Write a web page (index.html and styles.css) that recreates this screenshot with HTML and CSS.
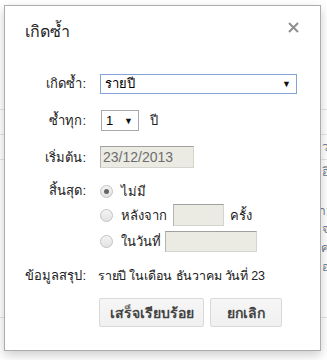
FILE: index.html
```html
<!DOCTYPE html>
<html lang="th">
<head>
    <meta charset="UTF-8">
    <meta name="viewport" content="width=device-width, initial-scale=1.0">
    <title>เกิดซ้ำ</title>
    <link rel="stylesheet" href="styles.css">
</head>
<body>

    <!-- หน้าที่อยู่ด้านหลังกล่องโต้ตอบ -->
    <div class="page">
        <div class="page-line line-a"></div>
        <div class="page-line line-b"><span>ว</span></div>
        <div class="page-line line-c"><span>อี</span></div>
        <div class="page-line line-d"><span>า:</span></div>
        <div class="page-text"><span>จ</span><span>ค</span><span>อ</span></div>
        <div class="page-line line-e"></div>
    </div>

    <div class="dialog">
        <div class="dialog-title">
            <span>เกิดซ้ำ</span>
            <span class="close">
                <svg width="11" height="11" viewBox="0 0 11 11">
                    <path d="M1 1 L10 10 M10 1 L1 10" stroke="#8f8f8f" stroke-width="2"/>
                </svg>
            </span>
        </div>

        <div class="row row-repeat">
            <div class="label">เกิดซ้ำ:</div>
            <div class="field">
                <div class="select select-wide"><span>รายปี</span><span class="arrow">▼</span></div>
            </div>
        </div>

        <div class="row row-every">
            <div class="label">ซ้ำทุก:</div>
            <div class="field">
                <div class="select select-small"><span>1</span><span class="arrow">▼</span></div>
                <span class="unit">ปี</span>
            </div>
        </div>

        <div class="row row-start">
            <div class="label">เริ่มต้น:</div>
            <div class="field">
                <div class="input input-date">23/12/2013</div>
            </div>
        </div>

        <div class="row row-end">
            <div class="label">สิ้นสุด:</div>
            <div class="field options">
                <div class="option option-first">
                    <span class="radio checked"></span>
                    <span>ไม่มี</span>
                </div>
                <div class="option">
                    <span class="radio"></span>
                    <span>หลังจาก</span>
                    <div class="input input-count"></div>
                    <span>ครั้ง</span>
                </div>
                <div class="option">
                    <span class="radio"></span>
                    <span>ในวันที่</span>
                    <div class="input input-until"></div>
                </div>
            </div>
        </div>

        <div class="row row-summary">
            <div class="label">ข้อมูลสรุป:</div>
            <div class="field summary">รายปี ในเดือน ธันวาคม วันที่ 23</div>
        </div>

        <div class="row row-buttons">
            <div></div>
            <div class="field buttons">
                <button class="button button-done">เสร็จเรียบร้อย</button>
                <button class="button button-cancel">ยกเลิก</button>
            </div>
        </div>
    </div>

</body>
</html>
```

FILE: styles.css
```css
body {
    margin: 0;
    width: 327px;
    height: 360px;
    overflow: hidden;
    position: relative;
    background-color: #fff;
    font-family: Arial, "Liberation Sans", Tahoma, sans-serif;
    font-size: 13px;
    color: #222;
}
.page {
    padding-top: 109px;
}
.page-line {
    height: 24px;
    border-top: 1px solid #e5e5e5;
    text-align: right;
    color: #6d7c93;
    font-size: 12px;
    line-height: 24px;
}
.page-line span {
    margin-right: -2px;
}
.line-c {
    height: 20px;
}
.line-d {
    height: 18px;
    line-height: 18px;
    margin-top: 22px;
    border-top: none;
}
.page-text {
    display: flex;
    flex-direction: column;
    align-items: flex-end;
    color: #6d7c93;
    font-size: 12px;
    line-height: 19px;
}
.page-text span {
    margin-right: -2px;
}
.line-e {
    margin-top: 40px;
    border-top-color: #e3e3e3;
}
.dialog {
    position: absolute;
    left: 4px;
    top: 5px;
    width: 315px;
    height: 344px;
    background-color: #fff;
    border: 1px solid #acacac;
    box-shadow: 0 4px 10px rgba(0, 0, 0, 0.2);
}
.dialog-title {
    display: flex;
    justify-content: space-between;
    align-items: center;
    padding: 12px 20px 0 20px;
    height: 26px;
    font-size: 16px;
    color: #222;
}
.close {
    display: flex;
    margin-top: -8px;
    margin-right: 1px;
}
.row {
    display: grid;
    grid-template-columns: 81px 1fr;
    column-gap: 14px;
    padding-right: 24px;
    align-items: center;
}
.label {
    text-align: right;
    color: #222;
}
.field {
    display: flex;
    align-items: center;
}
.row-repeat {
    margin-top: 29px;
}
.row-every {
    margin-top: 16px;
}
.row-start {
    margin-top: 15px;
}
.row-end {
    margin-top: 14px;
    align-items: start;
}
.row-end .label {
    line-height: 18px;
}
.row-summary {
    margin-top: 13px;
}
.row-buttons {
    margin-top: 12px;
}
.select {
    box-sizing: border-box;
    height: 20px;
    display: flex;
    align-items: center;
    justify-content: space-between;
    padding: 0 5px 0 4px;
    border: 1px solid #a9a9a9;
    background-color: #fff;
    color: #000;
}
.select-wide {
    width: 197px;
    border-color: #84a3d6;
}
.select-small {
    width: 38px;
    height: 21px;
    margin-left: 1px;
}
.arrow {
    font-size: 9px;
    color: #111;
}
.unit {
    margin-left: 11px;
}
.input {
    box-sizing: border-box;
    height: 22px;
    background-color: #ebebe4;
    border: 1px solid #d5d5d0;
    border-top-color: #a0a0a0;
    border-left-color: #b4b4b0;
    color: #6d6d6d;
    font-size: 14px;
    line-height: 20px;
    padding-left: 2px;
}
.input-date {
    width: 94px;
}
.input-count {
    width: 51px;
    margin: 0 6px 0 6px;
}
.input-until {
    width: 92px;
    height: 21px;
    margin-left: 4px;
}
.options {
    flex-direction: column;
    align-items: flex-start;
}
.option {
    display: flex;
    align-items: center;
    height: 22px;
    margin-top: 4px;
}
.option-first {
    height: 18px;
    margin-top: 0;
}
.radio {
    box-sizing: border-box;
    width: 13px;
    height: 13px;
    border-radius: 50%;
    border: 1px solid #c2c2c2;
    background: linear-gradient(#f4f4f4, #e2e2e2);
    margin: 0 8px 0 0;
    display: flex;
    align-items: center;
    justify-content: center;
}
.radio.checked::after {
    content: "";
    width: 5px;
    height: 5px;
    border-radius: 50%;
    background-color: #666;
}
.summary {
    margin-left: -2px;
    font-size: 12.5px;
    letter-spacing: -0.2px;
}
.buttons {
    gap: 6px;
    margin-left: -1px;
}
.button {
    box-sizing: border-box;
    height: 29px;
    padding: 0;
    white-space: nowrap;
    font-family: inherit;
    font-size: 14px;
    font-weight: bold;
    color: #444;
    background: linear-gradient(#f6f6f6, #f0f0f0);
    border: 1px solid #d9d9d9;
    border-radius: 2px;
}
.button-done {
    width: 105px;
}
.button-cancel {
    width: 72px;
}
```
